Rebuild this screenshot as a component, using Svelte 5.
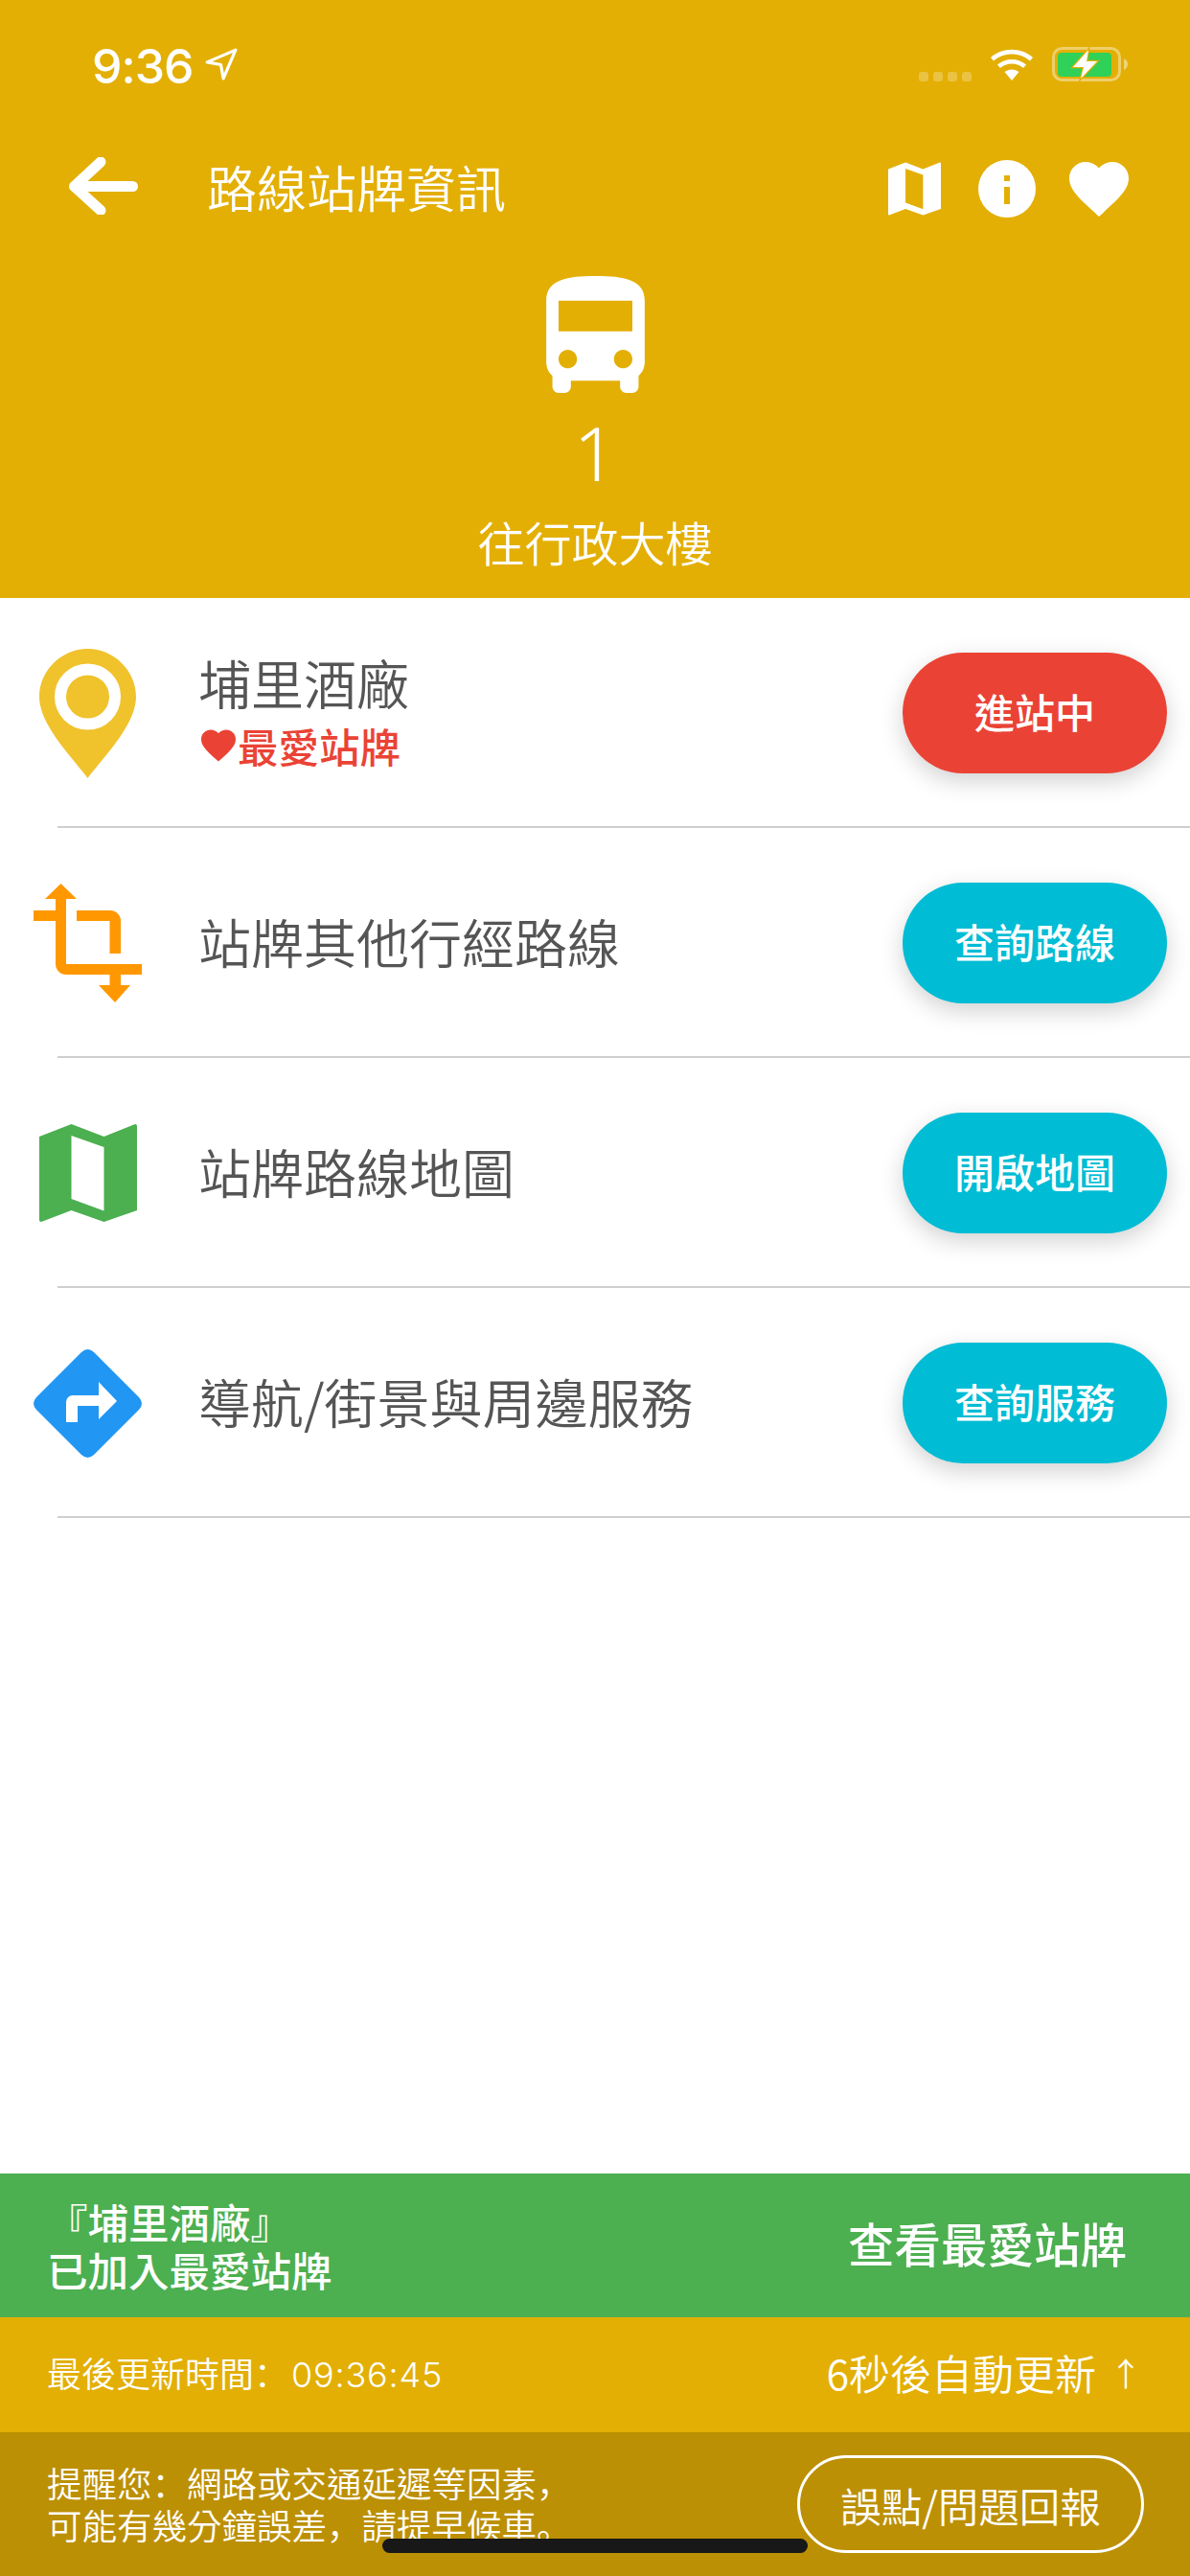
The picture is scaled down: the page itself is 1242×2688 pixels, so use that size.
<script>
  const rows = [
    { icon: "pin", title: "埔里酒廠", fav: "最愛站牌", action: "進站中", tone: "red" },
    { icon: "route", title: "站牌其他行經路線", action: "查詢路線", tone: "cyan" },
    { icon: "map", title: "站牌路線地圖", action: "開啟地圖", tone: "cyan" },
    { icon: "turn", title: "導航/街景與周邊服務", action: "查詢服務", tone: "cyan" }
  ];

  const heart = "M12 21.35l-1.45-1.32C5.4 15.36 2 12.28 2 8.5 2 5.42 4.42 3 7.5 3c1.74 0 3.41.81 4.5 2.09C13.09 3.81 14.76 3 16.5 3 19.58 3 22 5.42 22 8.5c0 3.78-3.4 6.86-8.55 11.54L12 21.35z";
  const foldedMap = "M0 13 33.5 0 67.5 13 100 0Q102 0 102 2V90L67.5 102 33.5 90 2 102Q0 102 0 100ZM33.5 12V78L67.5 90.5V24Z";
</script>

<div class="screen">
  <header class="top">
    <div class="status">
      <div class="clock">
        <span class="time">9:36</span>
        <svg class="locate" viewBox="0 0 32 32"><path d="M2 14 30 2 18 30 15.5 16.5Z" fill="none" stroke="#fff" stroke-width="3" stroke-linejoin="round" /></svg>
      </div>
      <div class="status-right">
        <div class="signal"><i></i><i></i><i></i><i></i></div>
        <svg class="wifi" viewBox="0 0 48 36">
          <path d="M2 11C14 0 34 0 46 11L43 14.5C32.500 5 15.500 5 5 14.500Z" fill="#fff" />
          <path d="M9 18.500C17 11 31 11 39 18.500L36 22C29.500 16 18.500 16 12 22Z" fill="#fff" />
          <path d="M16.500 26C21 22.500 27 22.500 31.500 26L24 35Z" fill="#fff" />
        </svg>
        <svg class="battery" viewBox="0 0 80 36">
          <rect x="1.500" y="1.500" width="69" height="33" rx="9" fill="none" stroke="#fff" stroke-opacity=".4" stroke-width="3" />
          <rect x="6" y="6" width="56" height="25" rx="4" fill="#30d158" />
          <path d="M75 12Q79 14 79 18T75 24Z" fill="#fff" fill-opacity=".45" />
          <path d="M38 3 22 21H33L30 33 47 15H36Z" fill="#fff" stroke="#e3af05" stroke-width="2.500" paint-order="stroke" />
        </svg>
      </div>
    </div>

    <nav class="bar">
      <svg class="back" viewBox="0 0 72 60"><path d="M33 5 5.500 30.500 33 55.500M5.500 30.500H66.500" fill="none" stroke="#fff" stroke-width="11" stroke-linecap="round" stroke-linejoin="round" /></svg>
      <h1>路線站牌資訊</h1>
      <div class="actions">
        <svg class="act-map" viewBox="0 0 102 102"><path d={foldedMap} fill="#fff" fill-rule="evenodd" /></svg>
        <svg class="act-info" viewBox="0 0 62 62">
          <circle cx="31" cy="31" r="30" fill="#fff" />
          <rect x="28" y="17" width="6" height="6" fill="#e3af05" />
          <rect x="28" y="29" width="6" height="18" fill="#e3af05" />
        </svg>
        <svg class="act-heart" viewBox="2 3 20 18.350"><path d={heart} fill="#fff" /></svg>
      </div>
    </nav>

    <div class="route">
      <svg class="bus" viewBox="4 2 16 19"><path d="M4 16c0 .88.39 1.670 1 2.220V20c0 .55.45 1 1 1h1c.55 0 1-.45 1-1v-1h8v1c0 .55.45 1 1 1h1c.55 0 1-.45 1-1v-1.780c.61-.55 1-1.340 1-2.220V6c0-3.500-3.580-4-8-4s-8 .5-8 4v10zm3.500 1c-.83 0-1.500-.67-1.500-1.500S6.670 14 7.500 14s1.500.67 1.500 1.500S8.330 17 7.500 17zm9 0c-.83 0-1.500-.67-1.500-1.500s.67-1.500 1.500-1.500 1.500.67 1.500 1.500-.67 1.500-1.500 1.500zm1.500-6H6V6h12v5z" fill="#fff" /></svg>
      <div class="number">1</div>
      <div class="direction">往行政大樓</div>
    </div>
  </header>

  <main class="list">
    {#each rows as row}
      <section class="row">
        <div class="glyph">
          {#if row.icon === "pin"}
            <svg class="i-pin" viewBox="0 0 101 135">
              <path d="M50.500 0C78 0 101 23 101 50 101 80 65 115 50.500 135 36 115 0 80 0 50 0 23 23 0 50.500 0Z" fill="#f0c22c" />
              <circle cx="50.500" cy="50" r="28.500" fill="none" stroke="#fff" stroke-width="12" />
            </svg>
          {:else if row.icon === "route"}
            <svg class="i-route" viewBox="0 0 113 124">
              <path d="M28.500 0 45 16H34V84H113V95H34A11 11 0 0 1 23 84V39H0V28H23V16H12Z" fill="#ff9800" />
              <path d="M45 28H80A11 11 0 0 1 91 39V73H79.500V39H45ZM79.500 95H91V106H101L85 124 68 106H79.500Z" fill="#ff9800" />
            </svg>
          {:else if row.icon === "map"}
            <svg class="i-map" viewBox="0 0 102 102"><path d={foldedMap} fill="#4caf50" fill-rule="evenodd" /></svg>
          {:else}
            <svg class="i-turn" viewBox="0 0 113 113">
              <path d="M50 3Q56.500-3 63 3L110 50Q116 56.500 110 63L63 110Q56.500 116 50 110L3 63Q-3 56.500 3 50Z" fill="#2196f3" />
              <path d="M34 76V55A7 7 0 0 1 41 48H68V34L87 54 68 73V59H46V76Z" fill="#fff" />
            </svg>
          {/if}
        </div>
        <div class="label">
          <div class="title">{row.title}</div>
          {#if row.fav}
            <div class="fav">
              <svg viewBox="2 3 20 18.350"><path d={heart} fill="#ea4335" /></svg>
              <span>{row.fav}</span>
            </div>
          {/if}
        </div>
        <button class="pill {row.tone}">{row.action}</button>
      </section>
    {/each}
  </main>

  <footer class="bottom">
    <div class="added">
      <div class="added-text">『埔里酒廠』<br />已加入最愛站牌</div>
      <div class="see-fav">查看最愛站牌</div>
    </div>
    <div class="update">
      <div class="stamp">最後更新時間<span class="sc">：</span><span class="clock-num">09:36:45</span></div>
      <div class="countdown">6秒後自動更新<span class="up">↑</span></div>
    </div>
    <div class="notice">
      <div class="notice-text">提醒您<span class="sc">：</span>網路或交通延遲等因素<span class="sc">，</span><br />可能有幾分鐘誤差<span class="sc">，</span>請提早候車<span class="sc">。</span></div>
      <button class="report">誤點/問題回報</button>
    </div>
  </footer>

  <div class="home"></div>
</div>

<style>
  :global(body) {
    margin: 0;
    background: #fff;
  }

  .screen {
    position: relative;
    width: 1242px;
    height: 2688px;
    display: flex;
    flex-direction: column;
    overflow: hidden;
    font-family: "Noto Sans CJK TC", "Noto Sans", sans-serif;
  }

  .top {
    height: 624px;
    flex-shrink: 0;
    background: #e3af05;
    color: #fff;
    display: flex;
    flex-direction: column;
  }

  .status {
    height: 134px;
    display: flex;
    justify-content: space-between;
    align-items: center;
    padding: 0 64px 0 96px;
  }

  .clock {
    display: flex;
    align-items: center;
    gap: 12px;
  }

  .time {
    font-family: Inter, "Liberation Sans", sans-serif;
    font-size: 50px;
    font-weight: 500;
    letter-spacing: -1px;
    line-height: 1;
    padding-top: 3px;
  }

  .locate {
    width: 34px;
    height: 34px;
  }

  .status-right {
    display: flex;
    align-items: center;
    gap: 18px;
  }

  .signal {
    display: flex;
    gap: 5px;
    margin-top: 26px;
  }

  .signal i {
    width: 10px;
    height: 10px;
    border-radius: 3px;
    background: rgba(255, 255, 255, 0.25);
  }

  .wifi {
    width: 48px;
    height: 36px;
  }

  .battery {
    width: 80px;
    height: 36px;
  }

  .bar {
    height: 120px;
    display: flex;
    align-items: center;
    padding: 0 64px 0 72px;
  }

  .back {
    width: 72px;
    height: 60px;
    margin-right: 72px;
  }

  h1 {
    margin: 0;
    font-size: 52px;
    font-weight: 350;
    flex: 1;
  }

  .actions {
    display: flex;
    align-items: center;
    margin-top: 6px;
  }

  .act-map {
    width: 55px;
    height: 56px;
    margin-right: 38px;
  }

  .act-info {
    width: 62px;
    height: 62px;
    margin-right: 34px;
  }

  .act-heart {
    width: 62px;
    height: 57px;
  }

  .route {
    display: flex;
    flex-direction: column;
    align-items: center;
    padding-top: 34px;
  }

  .bus {
    width: 103px;
    height: 122px;
  }

  .number {
    font-family: "Noto Sans", sans-serif;
    font-size: 78px;
    font-weight: 350;
    line-height: 96px;
    margin-top: 14px;
  }

  .direction {
    font-size: 49px;
    font-weight: 350;
    line-height: 66px;
    margin-top: 12px;
  }

  .list {
    flex: 1;
  }

  .row {
    position: relative;
    height: 240px;
    box-sizing: border-box;
    display: flex;
    align-items: center;
    padding-right: 24px;
  }

  .row::after {
    content: "";
    position: absolute;
    left: 60px;
    right: 0;
    bottom: 0;
    height: 2px;
    background: #cfcfcf;
  }

  .glyph {
    width: 181px;
    margin-left: 26px;
    flex-shrink: 0;
    display: flex;
  }

  .i-pin {
    width: 101px;
    height: 135px;
    margin-left: 15px;
  }

  .i-route {
    width: 113px;
    height: 124px;
    margin-left: 9px;
  }

  .i-map {
    width: 102px;
    height: 102px;
    margin-left: 15px;
  }

  .i-turn {
    width: 113px;
    height: 113px;
    margin-left: 9px;
  }

  .label {
    flex: 1;
    color: #555;
    padding-bottom: 7px;
  }

  .title {
    font-size: 55px;
    font-weight: 350;
    line-height: 72px;
  }

  .fav {
    display: flex;
    align-items: center;
    gap: 2px;
    margin-top: 3px;
    margin-left: 3px;
    color: #ea4335;
    font-size: 42.5px;
    font-weight: 500;
    line-height: 56px;
  }

  .fav svg {
    width: 36px;
    height: 36px;
  }

  .pill {
    width: 276px;
    height: 126px;
    padding: 0 0 5px;
    border: none;
    border-radius: 63px;
    color: #fff;
    font: inherit;
    font-size: 42px;
    font-weight: 500;
    box-shadow: 0 8px 24px rgba(0, 0, 0, 0.18);
  }

  .pill.red {
    background: #ea4335;
  }

  .pill.cyan {
    background: #00bcd4;
  }

  .bottom {
    color: #fff;
    flex-shrink: 0;
  }

  .added {
    height: 150px;
    background: #4caf50;
    display: flex;
    justify-content: space-between;
    align-items: center;
    padding: 0 66px 0 49px;
  }

  .added-text {
    font-size: 42.5px;
    font-weight: 500;
    line-height: 50px;
  }

  .see-fav {
    font-size: 48.500px;
    font-weight: 500;
    padding-bottom: 6px;
  }

  .update {
    height: 120px;
    background: #e3af05;
    display: flex;
    justify-content: space-between;
    align-items: center;
    padding: 0 50px 0 49px;
  }

  .sc {
    font-family: "Noto Sans CJK SC", sans-serif;
  }

  .stamp {
    font-size: 36px;
    font-weight: 350;
    padding-bottom: 6px;
  }

  .clock-num {
    font-family: Inter, "Liberation Sans", sans-serif;
    font-weight: 300;
    letter-spacing: 0.8px;
    margin-left: 3px;
  }

  .countdown {
    display: flex;
    align-items: center;
    font-size: 43px;
    font-weight: 350;
    padding-bottom: 6px;
  }

  .up {
    font-size: 34px;
    margin-left: 14px;
  }

  .notice {
    height: 150px;
    background: #bc9004;
    display: flex;
    justify-content: space-between;
    align-items: center;
    padding: 0 48px 0 49px;
  }

  .notice-text {
    font-size: 36.5px;
    font-weight: 350;
    line-height: 44px;
    white-space: nowrap;
  }

  .report {
    width: 362px;
    height: 102px;
    flex-shrink: 0;
    background: none;
    border: 3px solid #fff;
    border-radius: 51px;
    color: #fff;
    font: inherit;
    font-size: 42.5px;
    font-weight: 350;
  }

  .home {
    position: absolute;
    left: 399px;
    bottom: 24px;
    width: 444px;
    height: 15px;
    border-radius: 8px;
    background: #181818;
  }
</style>
